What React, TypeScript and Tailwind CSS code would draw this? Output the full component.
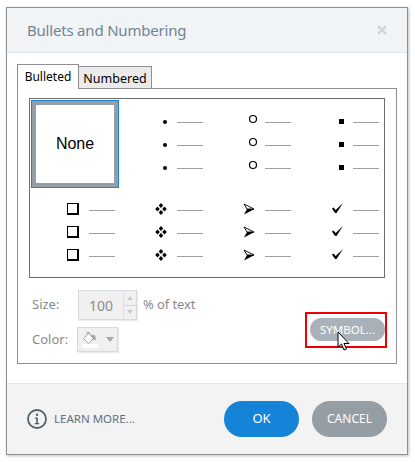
type BulletKind = 'dot' | 'circle' | 'square' | 'box' | 'diamonds' | 'arrow' | 'check'

function Glyph({ kind }: { kind: BulletKind }) {
  return (
    <svg width="20" height="16" viewBox="-4 0 20 16" className="shrink-0">
      {kind === 'dot' && <circle cx="8" cy="8" r="2" fill="#000" />}
      {kind === 'circle' && <circle cx="8" cy="5" r="3.5" fill="none" stroke="#000" strokeWidth="1.2" />}
      {kind === 'square' && <rect x="6" y="5" width="5" height="5" fill="#000" />}
      {kind === 'box' && <path d="M-2 1h12v12h-12zM-1 2v9h9v-9z" fill="#000" fillRule="evenodd" />}
      {kind === 'diamonds' && (
        <path
          d="M4 1l2.300 2.500-2.300 2.500-2.300-2.500zM4 8l2.300 2.500-2.300 2.500-2.300-2.500zM0.500 4.500l2.300 2.500-2.300 2.500-2.300-2.500zM7.500 4.500l2.300 2.500-2.300 2.500-2.300-2.500z"
          fill="#000"
        />
      )}
      {kind === 'arrow' && (
        <>
          <path d="M-1 2l10 5-7 0z" fill="#fff" stroke="#000" strokeWidth="0.9" />
          <path d="M9.500 7l-10.500 5.500 3-5.500z" fill="#000" />
        </>
      )}
      {kind === 'check' && <path d="M-1 6.500l1.500-1 2.200 2.500 7.300-7-6.500 10h-1.500z" fill="#000" />}
    </svg>
  )
}

function BulletCell({ kind }: { kind: BulletKind }) {
  return (
    <div className="flex flex-col justify-center gap-[7px] h-[88px] pt-[4px] pr-[3px]">
      {[0, 1, 2].map((i) => (
        <div key={i} className="flex items-center justify-end h-4">
          <Glyph kind={kind} />
          <div className="w-[26px] h-[2px] border-b border-[#a0a0a0] ml-[4px]" />
        </div>
      ))}
    </div>
  )
}

export default function App() {
  return (
    <div className="w-[415px] h-[462px] bg-white pt-[7px] pl-[6px] font-['Noto_Sans',sans-serif]">
      <div className="w-[402px] h-[448px] flex flex-col border border-[#8f8f8f] shadow-[1px_1px_3px_rgba(0,0,0,0.25)] bg-white">
        <div className="h-[45px] shrink-0 flex items-center justify-between px-[20px] bg-[#f0f4f7] border-b border-[#e1e4e6]">
          <span className="text-[15px] tracking-[-0.2px] text-[#74838e]">Bullets and Numbering</span>
          <svg width="10" height="10" viewBox="0 0 10 10">
            <path d="M1 1l8 8M9 1l-8 8" stroke="#cfd3d6" strokeWidth="2.4" />
          </svg>
        </div>

        <div className="flex-1 px-[10px] pt-[11px]">
          <div className="flex items-end relative z-10 -mb-px">
            <div className="w-[62px] h-[25px] bg-white border border-b-0 border-[#8e8e93] text-[12px] text-black text-center leading-[24px]">
              Bulleted
            </div>
            <div className="w-[73px] h-[23px] bg-[#ebebeb] border border-l-0 border-[#8e8e93] text-[12.5px] text-black text-center leading-[24px]">
              Numbered
            </div>
          </div>
          <div className="w-[380px] h-[276px] border border-[#8e8e93] pt-[9px] pl-[11px]">
            <div className="w-[356px] h-[180px] border border-[#6e6e6e]">
              <div className="grid grid-cols-[88px_88px_88px_88px]">
                <div className="ml-px mt-px -mb-px w-[88px] h-[88px] border border-[#1a84d8] flex">
                  <div className="flex-1 border-4 border-[#959da5] flex items-center justify-center text-[16px] text-black font-['Liberation_Sans',sans-serif]">
                    None
                  </div>
                </div>
                <BulletCell kind="dot" />
                <BulletCell kind="circle" />
                <BulletCell kind="square" />
                <BulletCell kind="box" />
                <BulletCell kind="diamonds" />
                <BulletCell kind="arrow" />
                <BulletCell kind="check" />
              </div>
            </div>

            <div className="flex justify-between pl-[3px] pr-[9px] pt-[12px]">
              <div className="flex flex-col gap-[7px]">
                <div className="flex items-center">
                  <span className="w-[46px] -mt-[1px] text-[13px] text-[#8a8a8a]">Size:</span>
                  <div className="w-[59px] h-[30px] flex bg-[#f0f0f0] border border-[#d5dade] shadow-[1px_1px_1px_#e8ecef]">
                    <div className="flex-1 flex items-center justify-center text-[14px] text-[#8c8c8c]">100</div>
                    <div className="w-[13px] flex flex-col border-l border-[#e0e0e0]">
                      <div className="flex-1 border-b border-[#d5dade] flex items-center justify-center">
                        <div className="w-0 h-0 border-x-[3px] border-x-transparent border-b-[4px] border-b-[#c8c8c8]" />
                      </div>
                      <div className="flex-1 flex items-center justify-center">
                        <div className="w-0 h-0 border-x-[3px] border-x-transparent border-t-[4px] border-t-[#c8c8c8]" />
                      </div>
                    </div>
                  </div>
                  <span className="ml-[6px] -mt-[1px] text-[13px] tracking-[-0.1px] text-[#8a8a8a]">% of text</span>
                </div>
                <div className="flex items-center">
                  <span className="w-[45px] text-[13px] text-[#8a8a8a]">Color:</span>
                  <div className="w-[41px] h-[25px] flex items-center gap-[8px] pl-[4px] bg-[#f0f0f0] border border-[#d5dade] shadow-[1px_1px_1px_#e8ecef]">
                    <svg width="16" height="16" viewBox="0 0 16 16">
                      <rect x="0" y="12" width="16" height="4" fill="#fff" />
                      <path d="M1.500 6.500l5-5 5 5-5 5z" fill="#fff" stroke="#a5a5a5" strokeWidth="1" />
                      <path d="M5 2V0.500h2.500V2" fill="none" stroke="#a5a5a5" strokeWidth="1" />
                      <path d="M9 2l4 1.500 1.500 5.500-1.500-1.500-2 .5z" fill="#a5a5a5" />
                    </svg>
                    <div className="w-0 h-0 border-x-[4px] border-x-transparent border-t-[5px] border-t-[#a8a8a8]" />
                  </div>
                </div>
              </div>

              <div className="relative self-start mt-[22px]">
                <div className="w-[82px] h-[36px] border-2 border-[#f00000] flex justify-end pt-[4px]">
                  <button className="w-[75px] h-[23px] rounded-full bg-[#a9b2b9] text-white text-[11.5px] leading-none">
                    SYMBOL...
                  </button>
                </div>
                <svg width="14" height="20" viewBox="0 0 14 20" className="absolute left-[32px] top-[19px]">
                  <path d="M1 1v15l3.500-3 2.500 6 2.500-1-2.500-5.500h5z" fill="#fff" stroke="#000" strokeWidth="1" />
                </svg>
              </div>
            </div>
          </div>
        </div>

        <div className="h-[71px] shrink-0 flex items-center justify-between px-[20px] bg-[#f3f3f3] border-t border-[#e4e4e4]">
          <div className="flex items-center gap-[7px]">
            <svg width="20" height="20" viewBox="0 0 20 20">
              <circle cx="10" cy="10" r="9" fill="none" stroke="#52626c" strokeWidth="1.800" />
              <circle cx="10" cy="5.800" r="1.200" fill="#52626c" />
              <path d="M8 8.500h2.800v5.500h1.400v1.200h-4.400v-1.200h1.400v-4.300h-1.200z" fill="#52626c" />
            </svg>
            <span className="text-[11.5px] text-[#5f7080]">LEARN MORE...</span>
          </div>
          <div className="flex gap-[13px]">
            <button className="w-[75px] h-[36px] rounded-full bg-[#1483d8] text-white text-[13px]">OK</button>
            <button className="w-[75px] h-[36px] rounded-full bg-[#959da5] text-white text-[12px]">CANCEL</button>
          </div>
        </div>
      </div>
    </div>
  )
}
